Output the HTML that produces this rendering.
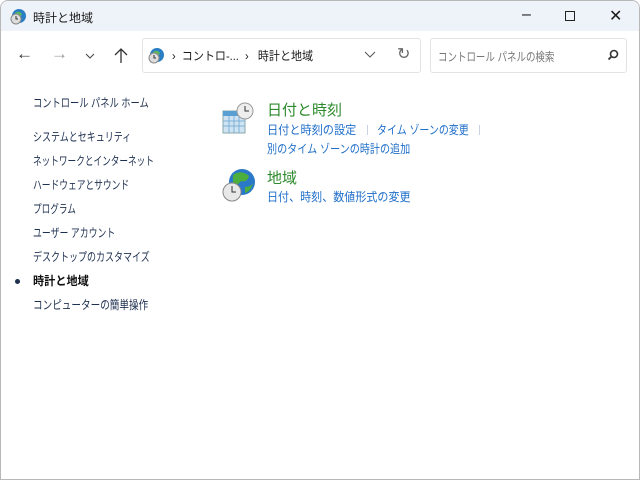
<!DOCTYPE html>
<html><head><meta charset="utf-8"><style>
*{margin:0;padding:0;box-sizing:border-box}
body{width:640px;height:480px;overflow:hidden;background:#fff;font-family:"Liberation Sans","Noto Sans CJK JP",sans-serif;position:relative}
.win{position:absolute;left:0;top:0;width:640px;height:480px;border:1px solid #b8b8b8;border-radius:8px 8px 0 0;overflow:hidden;background:#fff}
.title{position:absolute;left:0;top:0;width:640px;height:30px;background:#eef2f9}
.t{position:absolute;font-size:12px;color:#1a1a1a;white-space:nowrap;transform-origin:0 50%}
.box{position:absolute;border:1px solid #e3e3e3;background:#fff;border-radius:3px}
.side{position:absolute;left:32px;font-size:12px;color:#1e3050;white-space:nowrap;transform-origin:0 50%}
.link{position:absolute;font-size:12px;color:#1e6ec8;white-space:nowrap;transform-origin:0 50%}
.head{position:absolute;font-size:15px;color:#2c8a2c;white-space:nowrap}
.sep{position:absolute;width:1px;height:10px;background:#c8d4e4}
</style></head><body><div class="win">
<div class="title"></div>
<svg style="position:absolute;left:9px;top:7px" width="17" height="17" viewBox="0 0 17 17"><circle cx="9" cy="8" r="7" fill="#2a7fc4"/><path d="M5 5 Q9 2 12 6 Q10 10 7 9Z" fill="#5cb85c"/><circle cx="6" cy="11" r="5" fill="#ddd" stroke="#888"/><path d="M6 8v3h2" stroke="#333" fill="none"/></svg>
<div class="t" style="left:32px;top:8px">時計と地域</div>
<div class="t" style="left:521px;top:5px;font-size:16px">–</div>
<div style="position:absolute;left:564px;top:10px;width:10px;height:10px;border:1px solid #222"></div>
<div class="t" style="left:608px;top:5px;font-size:16px">✕</div>
<div class="t" style="left:15px;top:43px;font-size:17px;color:#333">←</div>
<div class="t" style="left:50px;top:43px;font-size:17px;color:#999">→</div>
<svg style="position:absolute;left:84px;top:52px" width="10" height="6"><path d="M1 1l4 4 4-4" stroke="#444" fill="none"/></svg>
<svg style="position:absolute;left:113px;top:47px" width="14" height="16"><path d="M7 15V1M1 7l6-6 6 6" stroke="#333" stroke-width="1.3" fill="none"/></svg>
<div class="box" style="left:141px;top:37px;width:279px;height:35px"></div>
<svg style="position:absolute;left:147px;top:46px" width="17" height="17" viewBox="0 0 17 17"><circle cx="9" cy="8" r="7" fill="#2a7fc4"/><path d="M5 5 Q9 2 12 6 Q10 10 7 9Z" fill="#5cb85c"/><circle cx="6" cy="11" r="5" fill="#ddd" stroke="#888"/><path d="M6 8v3h2" stroke="#333" fill="none"/></svg>
<div class="t" style="left:171px;top:46px;transform:scaleX(0.92)">›&nbsp; コントロ-...&nbsp; ›&nbsp;&nbsp; 時計と地域</div>
<svg style="position:absolute;left:363px;top:50px" width="12" height="7"><path d="M1 1l5 5 5-5" stroke="#555" fill="none"/></svg>
<div class="t" style="left:396px;top:43px;font-size:16px;color:#666">↻</div>
<div class="box" style="left:429px;top:37px;width:197px;height:35px"></div>
<div class="t" style="left:437px;top:47px;color:#777;transform:scaleX(0.79)">コントロール パネルの検索</div>
<svg style="position:absolute;left:606px;top:48px" width="12" height="12"><circle cx="7" cy="5" r="3.5" stroke="#333" stroke-width="1.6" fill="none"/><path d="M4.5 7.5L1.5 10.5" stroke="#333" stroke-width="1.8"/></svg>
<div class="side" style="top:93px;transform:scaleX(0.77)">コントロール パネル ホーム</div>
<div class="side" style="top:127px;transform:scaleX(0.75)">システムとセキュリティ</div>
<div class="side" style="top:151px;transform:scaleX(0.72)">ネットワークとインターネット</div>
<div class="side" style="top:175px;transform:scaleX(0.73)">ハードウェアとサウンド</div>
<div class="side" style="top:199px;transform:scaleX(0.72)">プログラム</div>
<div class="side" style="top:223px;transform:scaleX(0.74)">ユーザー アカウント</div>
<div class="side" style="top:247px;transform:scaleX(0.75)">デスクトップのカスタマイズ</div>
<div style="position:absolute;left:14px;top:278px;width:5px;height:5px;border-radius:50%;background:#1e3050"></div>
<div class="side" style="top:271px;font-weight:bold;color:#111;transform:scaleX(0.93)">時計と地域</div>
<div class="side" style="top:295px;transform:scaleX(0.8)">コンピューターの簡単操作</div>
<svg style="position:absolute;left:220px;top:100px" width="34" height="34" viewBox="0 0 34 34"><rect x="2" y="10" width="22" height="22" fill="#cfe3f2" stroke="#8aa"/><rect x="2" y="10" width="22" height="5" fill="#5a9fd4"/><path d="M2 20h22M2 25h22M8 15v17M13 15v17M18 15v17" stroke="#7fb0d8"/><circle cx="24" cy="10" r="8" fill="#eee" stroke="#999"/><path d="M24 5v5h4" stroke="#333" fill="none"/></svg>
<div class="head" style="left:266px;top:98px">日付と時刻</div>
<div class="link" style="left:266px;top:120px;transform:scaleX(0.93)">日付と時刻の設定</div>
<div class="sep" style="left:366px;top:124px"></div>
<div class="link" style="left:376px;top:120px;transform:scaleX(0.83)">タイム ゾーンの変更</div>
<div class="sep" style="left:478px;top:124px"></div>
<div class="link" style="left:266px;top:139px;transform:scaleX(0.84)">別のタイム ゾーンの時計の追加</div>
<svg style="position:absolute;left:220px;top:166px" width="36" height="36" viewBox="0 0 36 36"><circle cx="21" cy="15" r="13" fill="#2a78c8"/><path d="M12 8 Q20 2 28 9 Q26 16 20 14 Q16 20 12 15Z" fill="#4cae3c"/><path d="M24 20 Q30 20 32 16 Q30 24 24 26Z" fill="#4cae3c"/><circle cx="11" cy="25" r="9" fill="#e8e8e8" stroke="#888"/><path d="M11 19v6h4" stroke="#333" fill="none"/></svg>
<div class="head" style="left:266px;top:166px">地域</div>
<div class="link" style="left:266px;top:187px;transform:scaleX(0.92)">日付、時刻、数値形式の変更</div>
</div></body></html>
